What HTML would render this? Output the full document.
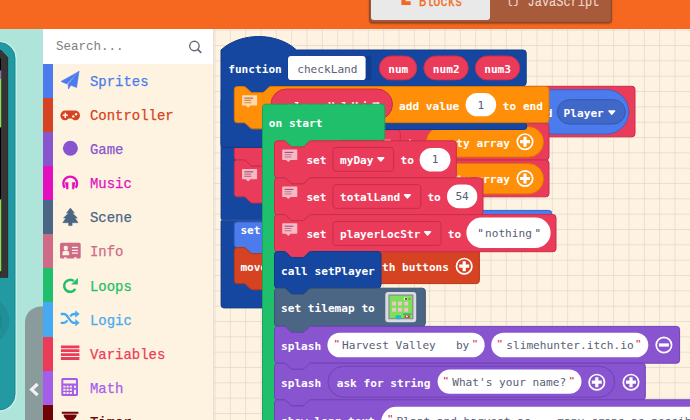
<!DOCTYPE html>
<html><head><meta charset="utf-8"><title>MakeCode Arcade</title>
<style>
html,body{margin:0;padding:0}
body{width:690px;height:420px;overflow:hidden;position:relative;background:#fef3e0;font-family:"Liberation Mono",monospace}
#ws{position:absolute;left:0;top:0}
#ws text{font-family:"DejaVu Sans Mono","Liberation Mono",monospace;font-size:11.1px}
#ws text.b{font-weight:bold}
#ws text.q{font-size:9.2px;font-weight:bold}
#hdr{position:absolute;left:0;top:0;width:690px;height:28.8px;background:#f6681f}
#tabs{position:absolute;left:368.6px;top:-10px;width:243.4px;height:32.8px;background:#a85b3b;border-radius:4px;box-shadow:0 1px 1.5px rgba(90,40,10,.5),inset 0 0 0 1.2px rgba(110,50,35,.45)}
#tab1{position:absolute;left:2px;top:0;width:119.4px;height:30.4px;background:#e9e9e9;border-radius:3px;color:#f26a21}
#tab2{position:absolute;left:122px;top:0;width:121px;height:31px;color:#f1d8cc}
#tab2 .tl{-webkit-text-stroke:.12px currentColor}
.tl{position:absolute;top:4px;font-size:14px;line-height:16px;white-space:nowrap;transform:scaleX(.855);transform-origin:0 0;-webkit-text-stroke:.35px currentColor}
#sim{position:absolute;left:0;top:28.6px;width:43px;height:392px;background:#afe4db;overflow:hidden}
#tb{position:absolute;left:43px;top:28.6px;width:170px;height:392px;background:#fef3e0;border-right:1px solid #ece0d2}
#search{position:absolute;left:43px;top:28.6px;width:170px;height:35.4px;background:#fff}
#search span{position:absolute;left:13.4px;top:6px;font-size:13.5px;line-height:24px;color:#7d7d7d;transform:scaleX(.926);transform-origin:0 50%;white-space:nowrap}
.cat{position:absolute;left:43px;width:160px;height:34.2px;border-left:10px solid #000;box-sizing:border-box;width:170px}
.cat span{position:absolute;left:37px;top:7.1px;font-size:15px;line-height:24px;transform:scaleX(.93);-webkit-text-stroke:.25px currentColor;transform-origin:0 50%;white-space:nowrap}
#ic{position:absolute;left:0;top:0;pointer-events:none}
</style></head><body>
<svg id="ws" width="690" height="420" viewBox="0 0 690 420">
<defs><pattern id="grid" x="214.5" y="29.7" width="15.333" height="15.333" patternUnits="userSpaceOnUse"><path d="M0.5,0 V15.333 M0,0.5 H15.333" stroke="#dfd5d2" stroke-width="0.7" fill="none"/></pattern></defs>
<rect x="213" y="28" width="477" height="392" fill="#fef3e0"/>
<rect x="213" y="28" width="477" height="392" fill="url(#grid)"/>
<path d="M 221,221.4 a 1,1 0 0 1 1,-1 H 376 V 308 H 224 a 3,3 0 0 1 -3,-3 z" fill="#1546a0" stroke="#0f3a8a" stroke-width="0.8"/>
<path d="M 221,100 H 376 V 219.7 H 222.5 a 1.5,1.5 0 0 1 -1.5,-1.5 z" fill="#1546a0" stroke="#0f3a8a" stroke-width="0.8"/>
<rect x="430" y="86.3" width="205" height="50.5" rx="3.07" fill="#ea3b5a" stroke="#c82e49" stroke-width="1"/>
<rect x="470" y="89.7" width="158.8" height="44.3" rx="22.15" fill="#4b7bec" stroke="#3a63c8" stroke-width="1"/>
<rect x="557.3" y="99.7" width="68" height="24.3" rx="12.15" fill="#3f68c8" stroke="#3559ad" stroke-width="1"/>
<text x="563.6" y="116.7" class="b" fill="#fff" textLength="40.2" lengthAdjust="spacingAndGlyphs" xml:space="preserve">Player</text>
<path d="M 608.9,110.9 h 5.8 l -2.9,3.3 z" fill="#fff" stroke="#fff" stroke-width="1.4" stroke-linejoin="round"/>
<text x="525.6" y="116.7" class="b" fill="#fff" textLength="26.8" lengthAdjust="spacingAndGlyphs" xml:space="preserve">kind</text>
<path d="M 234.3,126.27 a 3.07,3.07 0 0 1 3.07,-3.07 H 243.5 c 1.53,0 2.3,0.77 3.07,1.53 l 3.07,3.07 c 0.77,0.77 1.53,1.53 3.07,1.53 h 9.2 c 1.53,0 2.3,-0.77 3.07,-1.53 l 3.07,-3.07 c 0.77,-0.77 1.53,-1.53 3.07,-1.53 H 545.93 a 3.07,3.07 0 0 1 3.07,3.07 V 156.93 a 3.07,3.07 0 0 1 -3.07,3.07 H 271.12 c -1.53,0 -2.3,0.77 -3.07,1.53 l -3.07,3.07 c -0.77,0.77 -1.53,1.53 -3.07,1.53 h -9.2 c -1.53,0 -2.3,-0.77 -3.07,-1.53 l -3.07,-3.07 c -0.77,-0.77 -1.53,-1.53 -3.07,-1.53 H 237.37 a 3.07,3.07 0 0 1 -3.07,-3.07 z" fill="#ea3b5a" stroke="#c82e49" stroke-width="1"/>
<path d="M 234.3,163.07 a 3.07,3.07 0 0 1 3.07,-3.07 H 243.5 c 1.53,0 2.3,0.77 3.07,1.53 l 3.07,3.07 c 0.77,0.77 1.53,1.53 3.07,1.53 h 9.2 c 1.53,0 2.3,-0.77 3.07,-1.53 l 3.07,-3.07 c 0.77,-0.77 1.53,-1.53 3.07,-1.53 H 545.93 a 3.07,3.07 0 0 1 3.07,3.07 V 193.73 a 3.07,3.07 0 0 1 -3.07,3.07 H 271.12 c -1.53,0 -2.3,0.77 -3.07,1.53 l -3.07,3.07 c -0.77,0.77 -1.53,1.53 -3.07,1.53 h -9.2 c -1.53,0 -2.3,-0.77 -3.07,-1.53 l -3.07,-3.07 c -0.77,-0.77 -1.53,-1.53 -3.07,-1.53 H 237.37 a 3.07,3.07 0 0 1 -3.07,-3.07 z" fill="#ea3b5a" stroke="#c82e49" stroke-width="1"/>
<rect x="300" y="129.8" width="100.3" height="24.3" rx="3.07" fill="#ea3b5a" stroke="#c82e49" stroke-width="1"/>
<text x="407" y="146.5" class="b" fill="#fff" textLength="13.4" lengthAdjust="spacingAndGlyphs" xml:space="preserve">to</text>
<path d="M 384.7,140.4 h 5.8 l -2.9,3.3 z" fill="#fff" stroke="#fff" stroke-width="1.4" stroke-linejoin="round"/>
<rect x="426.4" y="126.7" width="117.2" height="30.4" rx="15.2" fill="#ff8f08" stroke="#d97704" stroke-width="1"/>
<text x="436.2" y="146.5" class="b" fill="#fff" textLength="73.7" lengthAdjust="spacingAndGlyphs" xml:space="preserve">empty array</text>
<circle cx="525" cy="141.7" r="7.7" fill="none" stroke="#fff" stroke-width="1.7"/>
<path d="M 520,141.7 h 10 M 525,136.7 v 10" stroke="#fff" stroke-width="3.2"/>
<rect x="300" y="166.6" width="100.3" height="24.3" rx="3.07" fill="#ea3b5a" stroke="#c82e49" stroke-width="1"/>
<text x="407" y="183.3" class="b" fill="#fff" textLength="13.4" lengthAdjust="spacingAndGlyphs" xml:space="preserve">to</text>
<path d="M 384.7,177.2 h 5.8 l -2.9,3.3 z" fill="#fff" stroke="#fff" stroke-width="1.4" stroke-linejoin="round"/>
<rect x="426.4" y="163.5" width="117.2" height="30.4" rx="15.2" fill="#ff8f08" stroke="#d97704" stroke-width="1"/>
<text x="436.2" y="183.3" class="b" fill="#fff" textLength="73.7" lengthAdjust="spacingAndGlyphs" xml:space="preserve">empty array</text>
<circle cx="525" cy="178.5" r="7.7" fill="none" stroke="#fff" stroke-width="1.7"/>
<path d="M 520,178.5 h 10 M 525,173.5 v 10" stroke="#fff" stroke-width="3.2"/>
<path d="M 242.7,168.9 h 13.700 a 0.700,0.700 0 0 1 0.700,0.700 v 9 a 0.700,0.700 0 0 1 -0.700,0.700 h -6 l -2.300,2.200 l -2.300,-2.200 h -3.100 a 0.700,0.700 0 0 1 -0.700,-0.700 v -9 a 0.700,0.700 0 0 1 0.700,-0.700 z" fill="#f7b9c4"/>
<path d="M 244.4,171.8 h 8.800" stroke="#96527a" stroke-width="1.100" fill="none"/>
<path d="M 244.4,174.1 h 6.800 M 244.4,176.4 h 6.800" stroke="#c8708a" stroke-width="1.100" fill="none"/>
<path d="M 221,50 c 19.7,-18 55.8,-18 75.5,0 H 523.2 a 3,3 0 0 1 3,3 V 82.7 a 3,3 0 0 1 -3,3 H 280 V 123 H 523.8 a 3,3 0 0 1 3,3 V 126.5 a 3,3 0 0 1 -3,3 H 264 V 147.4 H 224 a 3,3 0 0 1 -3,-3 z" fill="#1546a0" stroke="#0f3a8a" stroke-width="1"/>
<text x="228.2" y="72.9" class="b" fill="#fff" textLength="53.6" lengthAdjust="spacingAndGlyphs" xml:space="preserve">function</text>
<rect x="287.4" y="56" width="84" height="24" rx="3.07" fill="#123d8e"/>
<rect x="288" y="56.1" width="77.6" height="23.9" rx="3.07" fill="#fff"/>
<text x="297.2" y="72.5" class="n" fill="#575e75" textLength="60.3" lengthAdjust="spacingAndGlyphs" xml:space="preserve">checkLand</text>
<rect x="379.3" y="56" width="37.5" height="23.9" rx="11.95" fill="#ea3b5a" stroke="#c82e49" stroke-width="1"/>
<text x="388.2" y="72.9" class="b" fill="#fff" textLength="20.1" lengthAdjust="spacingAndGlyphs" xml:space="preserve">num</text>
<rect x="423.8" y="56" width="44.5" height="23.9" rx="11.95" fill="#ea3b5a" stroke="#c82e49" stroke-width="1"/>
<text x="432.8" y="72.9" class="b" fill="#fff" textLength="26.8" lengthAdjust="spacingAndGlyphs" xml:space="preserve">num2</text>
<rect x="475.3" y="56" width="44.5" height="23.9" rx="11.95" fill="#ea3b5a" stroke="#c82e49" stroke-width="1"/>
<text x="484.2" y="72.9" class="b" fill="#fff" textLength="26.8" lengthAdjust="spacingAndGlyphs" xml:space="preserve">num3</text>
<path d="M 234.3,89.57 a 3.07,3.07 0 0 1 3.07,-3.07 H 243.5 c 1.53,0 2.3,0.77 3.07,1.53 l 3.07,3.07 c 0.77,0.77 1.53,1.53 3.07,1.53 h 9.2 c 1.53,0 2.3,-0.77 3.07,-1.53 l 3.07,-3.07 c 0.77,-0.77 1.53,-1.53 3.07,-1.53 H 545.93 a 3.07,3.07 0 0 1 3.07,3.07 V 119.63 a 3.07,3.07 0 0 1 -3.07,3.07 H 271.12 c -1.53,0 -2.3,0.77 -3.07,1.53 l -3.07,3.07 c -0.77,0.77 -1.53,1.53 -3.07,1.53 h -9.2 c -1.53,0 -2.3,-0.77 -3.07,-1.53 l -3.07,-3.07 c -0.77,-0.77 -1.53,-1.53 -3.07,-1.53 H 237.37 a 3.07,3.07 0 0 1 -3.07,-3.07 z" fill="#ff8f08" stroke="#d97704" stroke-width="1"/>
<path d="M 242.7,95.2 h 13.700 a 0.700,0.700 0 0 1 0.700,0.700 v 9 a 0.700,0.700 0 0 1 -0.700,0.700 h -6 l -2.300,2.200 l -2.300,-2.200 h -3.100 a 0.700,0.700 0 0 1 -0.700,-0.700 v -9 a 0.700,0.700 0 0 1 0.700,-0.700 z" fill="#ffd9a8"/>
<path d="M 244.4,98.1 h 8.800" stroke="#a8627a" stroke-width="1.100" fill="none"/>
<path d="M 244.4,100.4 h 6.800 M 244.4,102.7 h 6.800" stroke="#d8883a" stroke-width="1.100" fill="none"/>
<rect x="271" y="89" width="121.5" height="30.7" rx="15.35" fill="#ea3b5a" stroke="#c82e49" stroke-width="1"/>
<text x="287.8" y="109.5" class="b" fill="#fff" textLength="93.8" lengthAdjust="spacingAndGlyphs" xml:space="preserve">playerHoldList</text>
<path d="M 373.1,103.1 h 5.8 l -2.9,3.3 z" fill="#fff" stroke="#fff" stroke-width="1.4" stroke-linejoin="round"/>
<text x="399" y="109.5" class="b" fill="#fff" textLength="60.3" lengthAdjust="spacingAndGlyphs" xml:space="preserve">add value</text>
<rect x="465.6" y="93.1" width="30.6" height="23.2" rx="11.6" fill="#fff"/>
<text x="477.6" y="109.1" class="n" fill="#575e75" textLength="6.7" lengthAdjust="spacingAndGlyphs" xml:space="preserve">1</text>
<text x="502.8" y="109.5" class="b" fill="#fff" textLength="40.2" lengthAdjust="spacingAndGlyphs" xml:space="preserve">to end</text>
<path d="M 234.3,225.07 a 3.07,3.07 0 0 1 3.07,-3.07 H 431.23 a 3.07,3.07 0 0 1 3.07,3.07 V 244.53 a 3.07,3.07 0 0 1 -3.07,3.07 H 271.12 c -1.53,0 -2.3,0.77 -3.07,1.53 l -3.07,3.07 c -0.77,0.77 -1.53,1.53 -3.07,1.53 h -9.2 c -1.53,0 -2.3,-0.77 -3.07,-1.53 l -3.07,-3.07 c -0.77,-0.77 -1.53,-1.53 -3.07,-1.53 H 237.37 a 3.07,3.07 0 0 1 -3.07,-3.07 z" fill="#4b7bec" stroke="#3a63c8" stroke-width="1"/>
<text x="240.4" y="233.7" class="b" fill="#fff" textLength="20.1" lengthAdjust="spacingAndGlyphs" xml:space="preserve">set</text>
<path d="M 234.3,250.67 a 3.07,3.07 0 0 1 3.07,-3.07 H 243.5 c 1.53,0 2.3,0.77 3.07,1.53 l 3.07,3.07 c 0.77,0.77 1.53,1.53 3.07,1.53 h 9.2 c 1.53,0 2.3,-0.77 3.07,-1.53 l 3.07,-3.07 c 0.77,-0.77 1.53,-1.53 3.07,-1.53 H 476.33 a 3.07,3.07 0 0 1 3.07,3.07 V 280.53 a 3.07,3.07 0 0 1 -3.07,3.07 H 271.12 c -1.53,0 -2.3,0.77 -3.07,1.53 l -3.07,3.07 c -0.77,0.77 -1.53,1.53 -3.07,1.53 h -9.2 c -1.53,0 -2.3,-0.77 -3.07,-1.53 l -3.07,-3.07 c -0.77,-0.77 -1.53,-1.53 -3.07,-1.53 H 237.37 a 3.07,3.07 0 0 1 -3.07,-3.07 z" fill="#d54322" stroke="#b5371b" stroke-width="1"/>
<text x="240.4" y="270.5" class="b" fill="#fff" textLength="26.8" lengthAdjust="spacingAndGlyphs" xml:space="preserve">move</text>
<path d="M 470,214.6 V 213.4 a 3,3 0 0 1 3,-3 H 548.8 a 3,3 0 0 1 3,3 V 216 z" fill="#4b7bec" stroke="#3a63c8" stroke-width="1"/>
<text x="382" y="270.5" class="b" fill="#fff" textLength="67" lengthAdjust="spacingAndGlyphs" xml:space="preserve">th buttons</text>
<circle cx="464.2" cy="266.2" r="7.7" fill="none" stroke="#fff" stroke-width="1.7"/>
<path d="M 459.2,266.2 h 10 M 464.2,261.2 v 10" stroke="#fff" stroke-width="3.2"/>
<path d="M 262.5,107.4 c 0,-1.8 1.2,-3.2 3,-3.2 H 381.8 a 3,3 0 0 1 3,3 V 137.4 a 3,3 0 0 1 -3,3 H 340 V 150 H 300 V 430 H 262.5 z" fill="#20bf6b" stroke="#1aa35b" stroke-width="1"/>
<text x="268.8" y="126.7" class="b" fill="#fff" textLength="53.6" lengthAdjust="spacingAndGlyphs" xml:space="preserve">on start</text>
<path d="M 274.5,143.87 a 3.07,3.07 0 0 1 3.07,-3.07 H 283.7 c 1.53,0 2.3,0.77 3.07,1.53 l 3.07,3.07 c 0.77,0.77 1.53,1.53 3.07,1.53 h 9.2 c 1.53,0 2.3,-0.77 3.07,-1.53 l 3.07,-3.07 c 0.77,-0.77 1.53,-1.53 3.07,-1.53 H 453.23 a 3.07,3.07 0 0 1 3.07,3.07 V 174.83 a 3.07,3.07 0 0 1 -3.07,3.07 H 311.32 c -1.53,0 -2.3,0.77 -3.07,1.53 l -3.07,3.07 c -0.77,0.77 -1.53,1.53 -3.07,1.53 h -9.2 c -1.53,0 -2.3,-0.77 -3.07,-1.53 l -3.07,-3.07 c -0.77,-0.77 -1.53,-1.53 -3.07,-1.53 H 277.57 a 3.07,3.07 0 0 1 -3.07,-3.07 z" fill="#ea3b5a" stroke="#c82e49" stroke-width="1"/>
<path d="M 282.9,149.5 h 13.700 a 0.700,0.700 0 0 1 0.700,0.700 v 9 a 0.700,0.700 0 0 1 -0.700,0.700 h -6 l -2.300,2.200 l -2.300,-2.200 h -3.100 a 0.700,0.700 0 0 1 -0.700,-0.700 v -9 a 0.700,0.700 0 0 1 0.700,-0.700 z" fill="#f7b9c4"/>
<path d="M 284.6,152.4 h 8.800" stroke="#96527a" stroke-width="1.100" fill="none"/>
<path d="M 284.6,154.7 h 6.800 M 284.6,157 h 6.800" stroke="#c8708a" stroke-width="1.100" fill="none"/>
<text x="306.4" y="164" class="b" fill="#fff" textLength="20.1" lengthAdjust="spacingAndGlyphs" xml:space="preserve">set</text>
<path d="M 274.5,180.87 a 3.07,3.07 0 0 1 3.07,-3.07 H 283.7 c 1.53,0 2.3,0.77 3.07,1.53 l 3.07,3.07 c 0.77,0.77 1.53,1.53 3.07,1.53 h 9.2 c 1.53,0 2.3,-0.77 3.07,-1.53 l 3.07,-3.07 c 0.77,-0.77 1.53,-1.53 3.07,-1.53 H 479.93 a 3.07,3.07 0 0 1 3.07,3.07 V 211.83 a 3.07,3.07 0 0 1 -3.07,3.07 H 311.32 c -1.53,0 -2.3,0.77 -3.07,1.53 l -3.07,3.07 c -0.77,0.77 -1.53,1.53 -3.07,1.53 h -9.2 c -1.53,0 -2.3,-0.77 -3.07,-1.53 l -3.07,-3.07 c -0.77,-0.77 -1.53,-1.53 -3.07,-1.53 H 277.57 a 3.07,3.07 0 0 1 -3.07,-3.07 z" fill="#ea3b5a" stroke="#c82e49" stroke-width="1"/>
<path d="M 282.9,186.5 h 13.700 a 0.700,0.700 0 0 1 0.700,0.700 v 9 a 0.700,0.700 0 0 1 -0.700,0.700 h -6 l -2.300,2.200 l -2.300,-2.200 h -3.100 a 0.700,0.700 0 0 1 -0.700,-0.700 v -9 a 0.700,0.700 0 0 1 0.700,-0.700 z" fill="#f7b9c4"/>
<path d="M 284.6,189.4 h 8.800" stroke="#96527a" stroke-width="1.100" fill="none"/>
<path d="M 284.6,191.7 h 6.800 M 284.6,194 h 6.800" stroke="#c8708a" stroke-width="1.100" fill="none"/>
<text x="306.4" y="201" class="b" fill="#fff" textLength="20.1" lengthAdjust="spacingAndGlyphs" xml:space="preserve">set</text>
<path d="M 274.5,217.67 a 3.07,3.07 0 0 1 3.07,-3.07 H 283.7 c 1.53,0 2.3,0.77 3.07,1.53 l 3.07,3.07 c 0.77,0.77 1.53,1.53 3.07,1.53 h 9.2 c 1.53,0 2.3,-0.77 3.07,-1.53 l 3.07,-3.07 c 0.77,-0.77 1.53,-1.53 3.07,-1.53 H 552.93 a 3.07,3.07 0 0 1 3.07,3.07 V 248.63 a 3.07,3.07 0 0 1 -3.07,3.07 H 311.32 c -1.53,0 -2.3,0.77 -3.07,1.53 l -3.07,3.07 c -0.77,0.77 -1.53,1.53 -3.07,1.53 h -9.2 c -1.53,0 -2.3,-0.77 -3.07,-1.53 l -3.07,-3.07 c -0.77,-0.77 -1.53,-1.53 -3.07,-1.53 H 277.57 a 3.07,3.07 0 0 1 -3.07,-3.07 z" fill="#ea3b5a" stroke="#c82e49" stroke-width="1"/>
<path d="M 282.9,223.3 h 13.700 a 0.700,0.700 0 0 1 0.700,0.700 v 9 a 0.700,0.700 0 0 1 -0.700,0.700 h -6 l -2.300,2.200 l -2.300,-2.200 h -3.100 a 0.700,0.700 0 0 1 -0.700,-0.700 v -9 a 0.700,0.700 0 0 1 0.700,-0.700 z" fill="#f7b9c4"/>
<path d="M 284.6,226.2 h 8.800" stroke="#96527a" stroke-width="1.100" fill="none"/>
<path d="M 284.6,228.5 h 6.800 M 284.6,230.8 h 6.800" stroke="#c8708a" stroke-width="1.100" fill="none"/>
<text x="306.4" y="237.8" class="b" fill="#fff" textLength="20.1" lengthAdjust="spacingAndGlyphs" xml:space="preserve">set</text>
<rect x="333" y="147.4" width="60.6" height="23.9" rx="3.07" fill="#ea3b5a" stroke="#c82e49" stroke-width="1"/>
<text x="340" y="163.7" class="b" fill="#fff" textLength="33.5" lengthAdjust="spacingAndGlyphs" xml:space="preserve">myDay</text>
<path d="M 377.9,157.7 h 5.8 l -2.9,3.3 z" fill="#fff" stroke="#fff" stroke-width="1.4" stroke-linejoin="round"/>
<text x="400.6" y="163.7" class="b" fill="#fff" textLength="13.4" lengthAdjust="spacingAndGlyphs" xml:space="preserve">to</text>
<rect x="419.6" y="148" width="30.9" height="23.6" rx="11.8" fill="#fff"/>
<text x="431.8" y="163.3" class="n" fill="#575e75" textLength="6.7" lengthAdjust="spacingAndGlyphs" xml:space="preserve">1</text>
<rect x="333" y="184.5" width="87.8" height="23.9" rx="3.07" fill="#ea3b5a" stroke="#c82e49" stroke-width="1"/>
<text x="340" y="200.8" class="b" fill="#fff" textLength="60.3" lengthAdjust="spacingAndGlyphs" xml:space="preserve">totalLand</text>
<path d="M 404.5,194.8 h 5.8 l -2.9,3.3 z" fill="#fff" stroke="#fff" stroke-width="1.4" stroke-linejoin="round"/>
<text x="427.4" y="200.8" class="b" fill="#fff" textLength="13.4" lengthAdjust="spacingAndGlyphs" xml:space="preserve">to</text>
<rect x="447" y="184.6" width="30.3" height="23.6" rx="11.8" fill="#fff"/>
<text x="455.4" y="200.4" class="n" fill="#575e75" textLength="13.4" lengthAdjust="spacingAndGlyphs" xml:space="preserve">54</text>
<rect x="333" y="221.5" width="108" height="23.9" rx="3.07" fill="#ea3b5a" stroke="#c82e49" stroke-width="1"/>
<text x="340" y="237.7" class="b" fill="#fff" textLength="80.4" lengthAdjust="spacingAndGlyphs" xml:space="preserve">playerLocStr</text>
<path d="M 424.7,231.7 h 5.8 l -2.9,3.3 z" fill="#fff" stroke="#fff" stroke-width="1.4" stroke-linejoin="round"/>
<text x="447.8" y="237.7" class="b" fill="#fff" textLength="13.4" lengthAdjust="spacingAndGlyphs" xml:space="preserve">to</text>
<rect x="466.4" y="217.4" width="84.2" height="30.6" rx="15.3" fill="#fff"/>
<text x="477.2" y="237.3" class="n" fill="#44506e" textLength="6.7" lengthAdjust="spacingAndGlyphs" xml:space="preserve">"</text>
<text x="485" y="237.3" class="n" fill="#575e75" textLength="46.9" lengthAdjust="spacingAndGlyphs" xml:space="preserve">nothing</text>
<text x="534.6" y="237.3" class="n" fill="#44506e" textLength="6.7" lengthAdjust="spacingAndGlyphs" xml:space="preserve">"</text>
<path d="M 274.5,254.57 a 3.07,3.07 0 0 1 3.07,-3.07 H 283.7 c 1.53,0 2.3,0.77 3.07,1.53 l 3.07,3.07 c 0.77,0.77 1.53,1.53 3.07,1.53 h 9.2 c 1.53,0 2.3,-0.77 3.07,-1.53 l 3.07,-3.07 c 0.77,-0.77 1.53,-1.53 3.07,-1.53 H 377.93 a 3.07,3.07 0 0 1 3.07,3.07 V 285.03 a 3.07,3.07 0 0 1 -3.07,3.07 H 311.32 c -1.53,0 -2.3,0.77 -3.07,1.53 l -3.07,3.07 c -0.77,0.77 -1.53,1.53 -3.07,1.53 h -9.2 c -1.53,0 -2.3,-0.77 -3.07,-1.53 l -3.07,-3.07 c -0.77,-0.77 -1.53,-1.53 -3.07,-1.53 H 277.57 a 3.07,3.07 0 0 1 -3.07,-3.07 z" fill="#1546a0" stroke="#0f3a8a" stroke-width="1"/>
<text x="281" y="274.5" class="b" fill="#fff" textLength="93.8" lengthAdjust="spacingAndGlyphs" xml:space="preserve">call setPlayer</text>
<path d="M 274.5,291.27 a 3.07,3.07 0 0 1 3.07,-3.07 H 283.7 c 1.53,0 2.3,0.77 3.07,1.53 l 3.07,3.07 c 0.77,0.77 1.53,1.53 3.07,1.53 h 9.2 c 1.53,0 2.3,-0.77 3.07,-1.53 l 3.07,-3.07 c 0.77,-0.77 1.53,-1.53 3.07,-1.53 H 422.23 a 3.07,3.07 0 0 1 3.07,3.07 V 323.23 a 3.07,3.07 0 0 1 -3.07,3.07 H 311.32 c -1.53,0 -2.3,0.77 -3.07,1.53 l -3.07,3.07 c -0.77,0.77 -1.53,1.53 -3.07,1.53 h -9.2 c -1.53,0 -2.3,-0.77 -3.07,-1.53 l -3.07,-3.07 c -0.77,-0.77 -1.53,-1.53 -3.07,-1.53 H 277.57 a 3.07,3.07 0 0 1 -3.07,-3.07 z" fill="#4b6584" stroke="#3d546f" stroke-width="1"/>
<text x="281" y="312" class="b" fill="#fff" textLength="93.8" lengthAdjust="spacingAndGlyphs" xml:space="preserve">set tilemap to</text>
<rect x="385.3" y="292" width="30.9" height="30.2" rx="3" fill="#d9dde3"/>
<rect x="388.4" y="294.6" width="25" height="24.7" rx="0.5" fill="#8c8290"/>
<rect x="389.5" y="295.6" width="22.8" height="22.6" rx="0" fill="#7be05a"/>
<rect x="392.1" y="301.6" width="3.9" height="3.9" fill="#f6c2cb"/>
<rect x="392.1" y="307.8" width="3.9" height="3.9" fill="#f6c2cb"/>
<rect x="398" y="301.6" width="3.9" height="3.9" fill="#f6c2cb"/>
<rect x="398" y="307.8" width="3.9" height="3.9" fill="#f6c2cb"/>
<rect x="404.2" y="301.6" width="3.9" height="3.9" fill="#f6c2cb"/>
<rect x="404.2" y="307.8" width="3.9" height="3.9" fill="#f6c2cb"/>
<rect x="404" y="297.6" width="3.2" height="2.4" fill="#fff"/><rect x="405.2" y="298" width="1.6" height="1.8" fill="#222"/><rect x="408.8" y="298" width="1.4" height="1.6" fill="#d8505a"/>
<rect x="395.4" y="315.3" width="5.9" height="4" rx="1.5" fill="#2fb5c0"/><rect x="404.5" y="315.3" width="5.3" height="2.6" fill="#a0522d"/><rect x="406" y="315.6" width="1.6" height="1.6" fill="#fff"/><rect x="402.9" y="313.6" width="8.5" height="0.9" fill="#2f6fb0"/>
<path d="M 274.5,329.47 a 3.07,3.07 0 0 1 3.07,-3.07 H 283.7 c 1.53,0 2.3,0.77 3.07,1.53 l 3.07,3.07 c 0.77,0.77 1.53,1.53 3.07,1.53 h 9.2 c 1.53,0 2.3,-0.77 3.07,-1.53 l 3.07,-3.07 c 0.77,-0.77 1.53,-1.53 3.07,-1.53 H 676.53 a 3.07,3.07 0 0 1 3.07,3.07 V 360.13 a 3.07,3.07 0 0 1 -3.07,3.07 H 311.32 c -1.53,0 -2.3,0.77 -3.07,1.53 l -3.07,3.07 c -0.77,0.77 -1.53,1.53 -3.07,1.53 h -9.2 c -1.53,0 -2.3,-0.77 -3.07,-1.53 l -3.07,-3.07 c -0.77,-0.77 -1.53,-1.53 -3.07,-1.53 H 277.57 a 3.07,3.07 0 0 1 -3.07,-3.07 z" fill="#8854d0" stroke="#7141b8" stroke-width="1"/>
<text x="281" y="349.7" class="b" fill="#fff" textLength="40.2" lengthAdjust="spacingAndGlyphs" xml:space="preserve">splash</text>
<rect x="327.4" y="332.7" width="157.3" height="24.6" rx="12.3" fill="#fff"/>
<text x="333.9" y="347" class="q" fill="#d63f58">"</text>
<text x="342" y="349.3" class="n" fill="#575e75" textLength="127.3" lengthAdjust="spacingAndGlyphs" xml:space="preserve">Harvest Valley   by</text>
<text x="472.3" y="347" class="q" fill="#d63f58">"</text>
<rect x="491.2" y="332.7" width="157.1" height="24.6" rx="12.3" fill="#fff"/>
<text x="497.1" y="347" class="q" fill="#d63f58">"</text>
<text x="506.3" y="349.3" class="n" fill="#575e75" textLength="127.3" lengthAdjust="spacingAndGlyphs" xml:space="preserve">slimehunter.itch.io</text>
<text x="635.5" y="347" class="q" fill="#d63f58">"</text>
<circle cx="663.9" cy="345" r="7.7" fill="none" stroke="#fff" stroke-width="1.7"/>
<path d="M 658.9,345 h 10" stroke="#fff" stroke-width="3.2"/>
<path d="M 274.5,366.27 a 3.07,3.07 0 0 1 3.07,-3.07 H 283.7 c 1.53,0 2.3,0.77 3.07,1.53 l 3.07,3.07 c 0.77,0.77 1.53,1.53 3.07,1.53 h 9.2 c 1.53,0 2.3,-0.77 3.07,-1.53 l 3.07,-3.07 c 0.77,-0.77 1.53,-1.53 3.07,-1.53 H 642.23 a 3.07,3.07 0 0 1 3.07,3.07 V 396.73 a 3.07,3.07 0 0 1 -3.07,3.07 H 311.32 c -1.53,0 -2.3,0.77 -3.07,1.53 l -3.07,3.07 c -0.77,0.77 -1.53,1.53 -3.07,1.53 h -9.2 c -1.53,0 -2.3,-0.77 -3.07,-1.53 l -3.07,-3.07 c -0.77,-0.77 -1.53,-1.53 -3.07,-1.53 H 277.57 a 3.07,3.07 0 0 1 -3.07,-3.07 z" fill="#8854d0" stroke="#7141b8" stroke-width="1"/>
<text x="281" y="386.7" class="b" fill="#fff" textLength="40.2" lengthAdjust="spacingAndGlyphs" xml:space="preserve">splash</text>
<rect x="328" y="366.3" width="286.7" height="30.9" rx="15.45" fill="#8854d0" stroke="#7141b8" stroke-width="1"/>
<text x="336.7" y="386.7" class="b" fill="#fff" textLength="93.8" lengthAdjust="spacingAndGlyphs" xml:space="preserve">ask for string</text>
<rect x="437.6" y="369.4" width="143.9" height="24.4" rx="12.2" fill="#fff"/>
<text x="442.9" y="384" class="q" fill="#d63f58">"</text>
<text x="452.2" y="386.3" class="n" fill="#575e75" textLength="113.9" lengthAdjust="spacingAndGlyphs" xml:space="preserve">What's your name?</text>
<text x="568.9" y="384" class="q" fill="#d63f58">"</text>
<circle cx="596.8" cy="382.2" r="7.7" fill="none" stroke="#fff" stroke-width="1.7"/>
<path d="M 591.8,382.2 h 10 M 596.8,377.2 v 10" stroke="#fff" stroke-width="3.2"/>
<circle cx="631" cy="382.2" r="7.7" fill="none" stroke="#fff" stroke-width="1.7"/>
<path d="M 626,382.2 h 10 M 631,377.2 v 10" stroke="#fff" stroke-width="3.2"/>
<path d="M 274.5,402.87 a 3.07,3.07 0 0 1 3.07,-3.07 H 283.7 c 1.53,0 2.3,0.77 3.07,1.53 l 3.07,3.07 c 0.77,0.77 1.53,1.53 3.07,1.53 h 9.2 c 1.53,0 2.3,-0.77 3.07,-1.53 l 3.07,-3.07 c 0.77,-0.77 1.53,-1.53 3.07,-1.53 H 771.43 a 3.07,3.07 0 0 1 3.07,3.07 V 436.73 a 3.07,3.07 0 0 1 -3.07,3.07 H 311.32 c -1.53,0 -2.3,0.77 -3.07,1.53 l -3.07,3.07 c -0.77,0.77 -1.53,1.53 -3.07,1.53 h -9.2 c -1.53,0 -2.3,-0.77 -3.07,-1.53 l -3.07,-3.07 c -0.77,-0.77 -1.53,-1.53 -3.07,-1.53 H 277.57 a 3.07,3.07 0 0 1 -3.07,-3.07 z" fill="#8854d0" stroke="#7141b8" stroke-width="1"/>
<text x="281" y="424.5" class="b" fill="#fff" textLength="93.8" lengthAdjust="spacingAndGlyphs" xml:space="preserve">show long text</text>
<rect x="381.2" y="406.8" width="400" height="30" rx="15" fill="#fff"/>
<text x="387.5" y="422" class="q" fill="#d63f58">"</text>
<text x="396.6" y="424.5" class="n" fill="#575e75" textLength="308.2" lengthAdjust="spacingAndGlyphs" xml:space="preserve">Plant and harvest as    many crops as possible</text>
</svg>
<div id="hdr"></div>
<div id="tabs"><div id="tab1"><span class="tl" style="left:48.3px">Blocks</span></div><div id="tab2"><span class="tl" style="left:15.4px"><span style="position:relative;top:-3px">{}</span> JavaScript</span></div></div>
<div id="sim">
<svg width="43" height="392" viewBox="0 28.6 43 392">
<rect x="-30" y="41.200" width="46.200" height="369.200" rx="17" fill="none" stroke="#c6eee5" stroke-width="1.800"/>
<rect x="-30" y="42" width="45" height="367.600" rx="16" fill="#2399a1" stroke="#0f8a93" stroke-width="0.900"/>
<circle cx="-15.200" cy="320.300" r="24.500" fill="#218f97"/>
<rect x="0" y="313.600" width="1.400" height="14.400" fill="#1f868e"/>
<path d="M-5,48.600 H1.300 L9,56.600 V278.500 H-5 z" fill="#22b2ba"/>
<path d="M-5,49.600 H1 L8,57 V277.400 H-5 z" fill="#353535" stroke="#2a1c24" stroke-width="0.500"/>
<rect x="0" y="58" width="1" height="214" fill="#000"/>
<rect x="0" y="70" width="1.200" height="8" fill="#9a6ab0"/><rect x="0" y="78" width="1.200" height="49" fill="#8be04e"/><rect x="0" y="199" width="1.200" height="72" fill="#8be04e"/>
<path d="M43,306 H41 a16,16 0 0 0 -16,16 V420 H43 z" fill="#8a9b9b"/>
<path d="M37.600,383.600 l-6,5.600 l6,5.600" fill="none" stroke="#f3f1f8" stroke-width="3.200"/>
</svg></div>
<div id="tb"></div>
<div id="search"><span>Search...</span></div>
<div class="cat" style="top:64.00px;border-left-color:#4b7bec;color:#4b7bec"><span>Sprites</span></div>
<div class="cat" style="top:98.07px;border-left-color:#d54322;color:#d54322"><span>Controller</span></div>
<div class="cat" style="top:132.14px;border-left-color:#8854d0;color:#8854d0"><span>Game</span></div>
<div class="cat" style="top:166.21px;border-left-color:#e30fc0;color:#e30fc0"><span>Music</span></div>
<div class="cat" style="top:200.28px;border-left-color:#4b6584;color:#4b6584"><span>Scene</span></div>
<div class="cat" style="top:234.35px;border-left-color:#cf6a87;color:#cf6a87"><span>Info</span></div>
<div class="cat" style="top:268.42px;border-left-color:#20bf6b;color:#20bf6b"><span>Loops</span></div>
<div class="cat" style="top:302.49px;border-left-color:#45aaf2;color:#45aaf2"><span>Logic</span></div>
<div class="cat" style="top:336.56px;border-left-color:#ec3b59;color:#ec3b59"><span>Variables</span></div>
<div class="cat" style="top:370.63px;border-left-color:#a55eea;color:#a55eea"><span>Math</span></div>
<div class="cat" style="top:404.70px;border-left-color:#700204;color:#700204"><span>Timer</span></div>
<svg id="ic" width="690" height="420" viewBox="0 0 690 420">
<circle cx="194.400" cy="46" r="4.700" fill="none" stroke="#666a7a" stroke-width="1.400"/><path d="M197.700,49.300 l3.100,3.100" stroke="#666a7a" stroke-width="1.700" stroke-linecap="round"/>
<path d="M61,81.4 L79,71.4 L66.9,83.9 z M79,71.4 L76.6,87.5 L70.9,85.3 L68.5,89 L68.1,84.3 z" fill="#4b7bec" stroke="#4b7bec" stroke-width="0.6" stroke-linejoin="round"/>
<path d="M65.4,110.600 H75 a5,5 0 0 1 5,5 a4.700,4.700 0 0 1 -4.700,4.700 c-1.600,0 -2.500,-0.800 -3.300,-1.900 h-3.600 c-0.800,1.100 -1.700,1.900 -3.300,1.900 a4.700,4.700 0 0 1 -4.700,-4.700 a5,5 0 0 1 5,-5 z" fill="#d54322"/><path d="M62.700,115.300 h5.200 M65.300,112.700 v5.200" stroke="#fef3e0" stroke-width="1.600"/><circle cx="73.300" cy="116.400" r="1.200" fill="#fef3e0"/><circle cx="76.100" cy="114.300" r="1.200" fill="#fef3e0"/>
<circle cx="70.400" cy="148.300" r="7.500" fill="#8854d0"/>
<path d="M64.700,187.700 A6.900,6.900 0 1 1 75.700,187.700" fill="none" stroke="#e30fc0" stroke-width="2.300"/><path d="M65.300,182.600 h2.800 v6.400 h-1.600 z M75.100,182.600 h-2.800 v6.400 h1.600 z" fill="#e30fc0" stroke="#e30fc0" stroke-width="0.500"/>
<path d="M70.400,208 l4,5.100 h-2 l5,4.900 h-2.400 l3.100,4.700 h-6 v2.900 h-3.500 v-2.900 h-5.800 l3.100,-4.700 h-2.400 l5,-4.900 h-2 z" fill="#4b6584" stroke="#4b6584" stroke-width="0.500" stroke-linejoin="round"/>
<path d="M61.500,242.700 h17.700 a1.500,1.500 0 0 1 1.500,1.500 v12.700 a1.500,1.500 0 0 1 -1.500,1.500 h-2.700 v-1.100 h-2.400 v1.100 h-7.500 v-1.100 h-2.400 v1.100 h-2.700 a1.500,1.500 0 0 1 -1.500,-1.500 v-12.700 a1.500,1.500 0 0 1 1.500,-1.500 z" fill="#cf6a87"/><circle cx="65.800" cy="248" r="2.200" fill="#fef3e0"/><path d="M62.400,255.200 v-1.400 a3.400,3.200 0 0 1 6.800,0 v1.400 z" fill="#fef3e0"/><path d="M71.900,247.400 h6 M71.900,250.300 h6 M71.900,253.100 h6" stroke="#fef3e0" stroke-width="1.300"/>
<path d="M75.300,288.900 A6,6 0 1 1 73.800,281.100" fill="none" stroke="#20bf6b" stroke-width="2.500"/><path d="M77.900,277.700 v6.700 h-6.700 z" fill="#20bf6b"/>
<path d="M60.700,314 h3.300 c4.200,0 5.500,8.800 9.700,8.800 h2.600 M60.700,322.800 h3.300 c1.500,0 2.500,-1.100 3.400,-2.400 M70.300,316.400 c0.900,-1.300 1.900,-2.400 3.400,-2.400 h2.600" fill="none" stroke="#45aaf2" stroke-width="2.300"/><path d="M75.500,310.700 l3.900,3.300 l-3.900,3.300 z M75.500,319.500 l3.900,3.300 l-3.900,3.300 z" fill="#45aaf2" stroke="#45aaf2" stroke-width="0.400" stroke-linejoin="round"/>
<path d="M60.900,346.800 h18.500 M60.900,350.700 h18.500 M60.900,354.600 h18.500 M60.900,358.500 h18.500" stroke="#ec3b59" stroke-width="2.800"/>
<rect x="61.300" y="378" width="16.700" height="18" rx="1.600" fill="#a55eea"/><rect x="63.300" y="380.100" width="12.700" height="3.400" fill="#fef3e0"/><path d="M63.300,386.600 h8.600 M63.300,389.800 h8.600 M63.300,393 h8.600" stroke="#fef3e0" stroke-width="1.900" stroke-dasharray="2.200,1"/><path d="M75,385.700 v2 M75,389.800 v4.200" stroke="#fef3e0" stroke-width="2.100"/>
<path d="M61.800,411.800 h16.600 v2 h-16.600 z M63.500,414.600 h13.200 c0,4 -4,5.500 -6.600,8 c-2.600,-2.500 -6.600,-4 -6.600,-8 z" fill="#700204"/>
<path d="M401.400,-4 H405.600 V1.200 H410.700 V4.900 H401.400 z" fill="#f26a21"/>
</svg>
</body></html>
